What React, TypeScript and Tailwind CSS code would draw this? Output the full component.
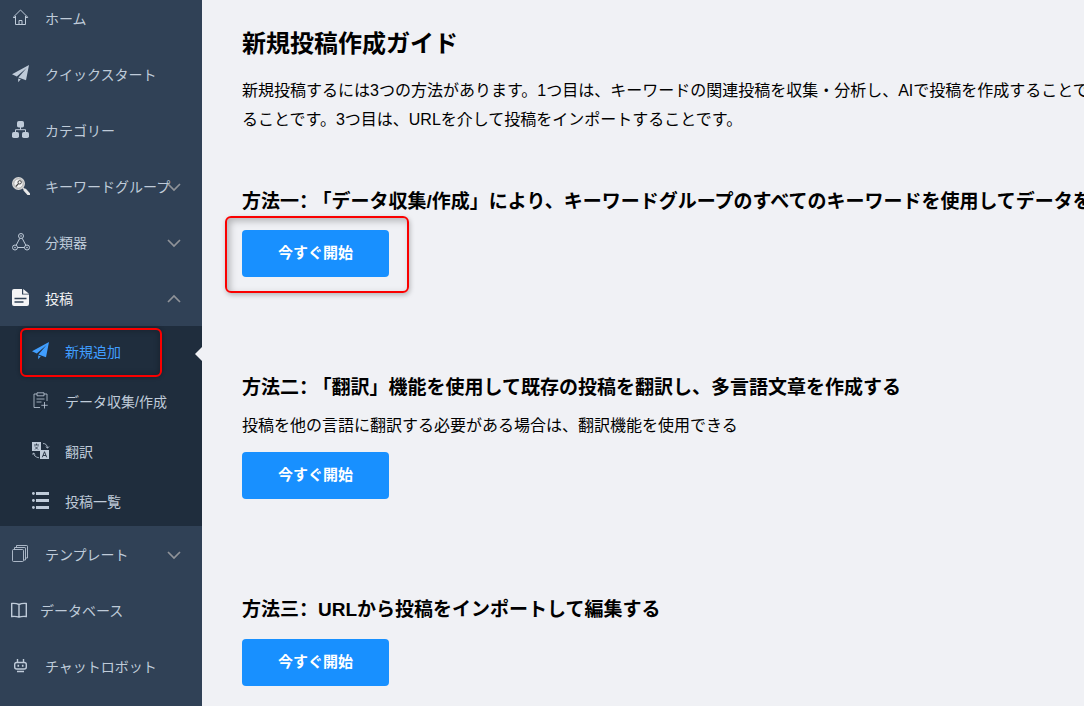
import type { ReactNode } from "react";

type Item = {
  label: string;
  icon: ReactNode;
  arrow?: "up" | "down";
  active?: boolean;
  compact?: boolean;
  children?: { label: string; icon: ReactNode; active?: boolean }[];
};

function Icon({ children }: { children: ReactNode }) {
  return (
    <svg
      viewBox="0 0 18 18"
      className="h-[18px] w-[18px] shrink-0"
      fill="none"
      stroke="currentColor"
      aria-hidden="true"
    >
      {children}
    </svg>
  );
}

const PlaneIcon = () => (
  <Icon>
    <g fill="currentColor" stroke="none">
      <path d="M17 0 0 9.2l4.8 2.2L14.6 3 6.4 12.4v.2L14 15.2z" />
      <path d="M6.2 13.4v3.8l2.6-2.9z" />
    </g>
  </Icon>
);

const HomeIcon = () => (
  <Icon>
    <path d="M1.3 8.2 8.5 1l7.2 7.2M3.5 7v8.5h10V7M7 15.5v-4h3v4M1.2 8.5h2.3M13.5 8.5h2.3" />
  </Icon>
);

const TreeIcon = () => (
  <Icon>
    <g fill="currentColor" stroke="none">
      <rect x="5" y="0" width="7" height="6.5" rx="1.8" />
      <rect x="0" y="11" width="7" height="6" rx="1.8" />
      <rect x="10" y="11" width="7" height="6" rx="1.8" />
    </g>
    <path d="M8.5 6v2.7M3.5 11.5V8.7h10v2.8" />
  </Icon>
);

const SearchIcon = () => (
  <Icon>
    <circle cx="6.5" cy="6.5" r="5.8" fill="#f2f2f2" stroke="#d5d5d5" strokeWidth="1.4" />
    <circle cx="6.5" cy="6.5" r="4.7" stroke="#777" strokeWidth=".6" />
    <path d="M3.8 9.5 6.5 6.7" stroke="#444" strokeWidth="1.2" />
    <circle cx="7.7" cy="5.3" r="1.7" stroke="#444" />
    <path d="m10.8 10.8 1.7 1.7" stroke="#ddd" strokeWidth="1.4" />
    <path d="m13 13 3.6 4" stroke="#e8e8e8" strokeWidth="3" strokeLinecap="round" />
  </Icon>
);

const NodesIcon = () => (
  <Icon>
    <circle cx="9" cy="3" r="2.5" />
    <circle cx="3" cy="14.5" r="2.5" />
    <circle cx="15" cy="14.5" r="2.5" />
    <path d="M7.8 5.3 4.2 12.2M10.2 5.3l3.6 6.9M5.5 14.5h7" />
    <g fill="currentColor" stroke="none">
      <circle cx="9" cy="3" r=".8" />
      <circle cx="3" cy="14.5" r=".8" />
      <circle cx="15" cy="14.5" r=".8" />
    </g>
  </Icon>
);

const PostIcon = () => (
  <Icon>
    <path
      d="M2 0h8v5.5h7V15a2 2 0 0 1-2 2H2a2 2 0 0 1-2-2V2a2 2 0 0 1 2-2z"
      fill="currentColor"
      stroke="none"
    />
    <path d="M11.2 0 17 4.8h-5.8z" fill="currentColor" stroke="none" />
    <path d="M2.5 9.5h12M2.5 13h9" stroke="#304156" strokeWidth="1.3" />
  </Icon>
);

const ClipboardIcon = () => (
  <Icon>
    <path
      d="M5 2H2v13.5h6M12 2h3v7M5 .8h7v3H5zM4.5 7h8M4.5 10h5M12.5 10v6.5M9.3 13.3h6.4"
      strokeOpacity=".8"
    />
  </Icon>
);

const TranslateIcon = () => (
  <Icon>
    <g fill="currentColor" stroke="none">
      <rect width="9" height="9" />
      <rect x="8" y="8" width="9" height="9" />
    </g>
    <path d="M2 3h5M4.5 1.5V3M3 4.5l3 3M6 4.5l-3 3" stroke="#1f2d3d" strokeWidth=".8" />
    <path d="m10.3 15.3 2.2-5.6 2.2 5.6M11 13.5h3" stroke="#1f2d3d" strokeWidth=".9" />
    <path
      d="M11 1.5q4 0 4.5 4.5M13.7 4.5l1.8 1.7L17 4.5M1.5 11q.5 4 5.5 4.8M0 12.7 1.5 11l1.8 1.6"
      strokeWidth=".8"
    />
  </Icon>
);

const ListIcon = () => (
  <Icon>
    <path d="M4 1.5h13M4 8.5h13M4 15.5h13" strokeWidth="3" />
    <g fill="currentColor" stroke="none">
      <circle cx="1.4" cy="1.5" r="1.4" />
      <circle cx="1.4" cy="8.5" r="1.4" />
      <circle cx="1.4" cy="15.5" r="1.4" />
    </g>
  </Icon>
);

const StackIcon = () => (
  <Icon>
    <g strokeOpacity=".85">
      <rect x=".5" y="4.5" width="11" height="12" rx="1" />
      <path d="M2.5 4.5v-2h10.3q.7 0 .7.7V15h-2M4.5 2.5v-2h10.3q.7 0 .7.7V13h-2" />
    </g>
  </Icon>
);

const BookIcon = () => (
  <svg
    viewBox="0 0 16 18"
    className="-ml-px h-[18px] w-4 shrink-0"
    fill="none"
    stroke="currentColor"
    strokeWidth="1.4"
    aria-hidden="true"
  >
    <path d="M8 3.5Q5 2 .7 2.5v13Q5 15 8 16.2q3-1.2 7.3-.7v-13Q11 2 8 3.5zM8 3.5v12.7" />
  </svg>
);

const RobotIcon = () => (
  <Icon>
    <rect x="2.7" y="5.5" width="11.6" height="6.5" rx="2" strokeWidth="1.4" />
    <path d="M5.5 2v3.5M11.5 2v3.5M5 14.5h7" strokeWidth="1.4" />
    <path d="M6.3 7.7v2M10.7 7.7v2" strokeWidth="1.6" />
  </Icon>
);

const menu: Item[] = [
  { label: "ホーム", icon: <HomeIcon /> },
  { label: "クイックスタート", icon: <PlaneIcon /> },
  { label: "カテゴリー", icon: <TreeIcon /> },
  { label: "キーワードグループ", icon: <SearchIcon />, arrow: "down" },
  { label: "分類器", icon: <NodesIcon />, arrow: "down" },
  {
    label: "投稿",
    icon: <PostIcon />,
    arrow: "up",
    active: true,
    children: [
      { label: "新規追加", icon: <PlaneIcon />, active: true },
      { label: "データ収集/作成", icon: <ClipboardIcon /> },
      { label: "翻訳", icon: <TranslateIcon /> },
      { label: "投稿一覧", icon: <ListIcon /> },
    ],
  },
  { label: "テンプレート", icon: <StackIcon />, arrow: "down" },
  { label: "データベース", icon: <BookIcon />, compact: true },
  { label: "チャットロボット", icon: <RobotIcon /> },
];

function Arrow({ dir }: { dir: "up" | "down" }) {
  return (
    <svg
      viewBox="0 0 14 14"
      className="absolute top-[22px] right-[21px] h-3.5 w-3.5"
      fill="none"
      stroke="#909399"
      strokeWidth="1.7"
      aria-hidden="true"
    >
      <path d={dir === "down" ? "M1 4l6 6 6-6" : "M1 10l6-6 6 6"} />
    </svg>
  );
}

function MenuItem({ item }: { item: Item }) {
  const row = `relative flex h-14 w-full items-center pl-3 ${
    item.compact ? "gap-[13px]" : "gap-[15px]"
  } ${item.active ? "text-[#f4f4f5]" : "text-[#bfcbd9]"}`;

  return (
    <li>
      {item.arrow ? (
        <button type="button" aria-expanded={item.arrow === "up"} className={row}>
          {item.icon}
          <span className="pt-0.5">{item.label}</span>
          <Arrow dir={item.arrow} />
        </button>
      ) : (
        <a href="#" className={row}>
          {item.icon}
          <span className="pt-0.5">{item.label}</span>
        </a>
      )}
      {item.children && (
        <ul className="bg-[#1f2d3d]">
          {item.children.map((child) => (
            <li key={child.label} className="relative">
              <a
                href="#"
                className={`flex h-[50px] items-center gap-[15px] pl-8 ${
                  child.active ? "text-[#409eff]" : "text-[#bfcbd9]"
                }`}
              >
                {child.icon}
                <span className="pt-0.5">{child.label}</span>
              </a>
              {child.active && (
                <>
                  <div className="absolute top-[2px] left-5 h-[49px] w-[142px] rounded-md border-2 border-[#fa0000] shadow-[0_0_4px_rgba(0,0,0,0.3),inset_0_0_6px_rgba(0,0,0,0.3)]" />
                  <div className="absolute top-[21px] right-0 border-y-[7px] border-r-[7px] border-y-transparent border-r-[#f0f1f5]" />
                </>
              )}
            </li>
          ))}
        </ul>
      )}
    </li>
  );
}

// full-width colon set to the left of its box
function Colon({ beforeQuote }: { beforeQuote?: boolean }) {
  return (
    <span
      className={`font-['Noto_Sans_CJK_SC'] leading-none ${beforeQuote ? "mr-1" : ""}`}
    >
      ：
    </span>
  );
}

function StartButton() {
  return (
    <button
      type="button"
      className="block h-[47px] rounded bg-[#1890ff] px-9 text-[15px] font-bold text-white"
    >
      今すぐ開始
    </button>
  );
}

export default function App() {
  return (
    <div className="flex min-h-screen bg-[#f0f1f5] font-['Liberation_Sans','Noto_Sans_CJK_JP',sans-serif] text-black">
      <aside className="w-[202px] shrink-0 overflow-hidden bg-[#304156] text-sm whitespace-nowrap">
        <nav className="-mt-2.5">
          <ul>
            {menu.map((item) => (
              <MenuItem key={item.label} item={item} />
            ))}
          </ul>
        </nav>
      </aside>

      <main className="min-w-0 flex-1 overflow-hidden pt-7 pb-5 pl-10 whitespace-nowrap">
        <h1 className="text-2xl leading-8 font-bold">新規投稿作成ガイド</h1>
        <p className="mt-4 text-base leading-[29px]">
          新規投稿するには3つの方法があります。1つ目は、キーワードの関連投稿を収集・分析し、AIで投稿を作成することで
          <br />
          ることです。3つ目は、URLを介して投稿をインポートすることです。
        </p>

        <section className="mt-[54px]">
          <h2 className="text-[19px] leading-7 font-bold">
            方法一
            <Colon beforeQuote />
            「データ収集/作成」により、キーワードグループのすべてのキーワードを使用してデータを
          </h2>
          <div className="relative mt-3.5 w-fit">
            <StartButton />
            <div className="pointer-events-none absolute -top-3.5 -right-5 -bottom-4 -left-[17px] rounded-md border-2 border-[#fa0000] shadow-[1px_2px_5px_rgba(0,0,0,0.25),inset_3px_3px_7px_rgba(0,0,0,0.25)]" />
          </div>
        </section>

        <section className="mt-[97px]">
          <h2 className="text-[19px] leading-7 font-bold">
            方法二
            <Colon beforeQuote />
            「翻訳」機能を使用して既存の投稿を翻訳し、多言語文章を作成する
          </h2>
          <p className="mt-[9px] text-base leading-[29px]">
            投稿を他の言語に翻訳する必要がある場合は、翻訳機能を使用できる
          </p>
          <div className="mt-3">
            <StartButton />
          </div>
        </section>

        <section className="mt-[97px]">
          <h2 className="text-[19px] leading-7 font-bold">
            方法三
            <Colon />
            URLから投稿をインポートして編集する
          </h2>
          <div className="mt-[15px]">
            <StartButton />
          </div>
        </section>
      </main>
    </div>
  );
}
